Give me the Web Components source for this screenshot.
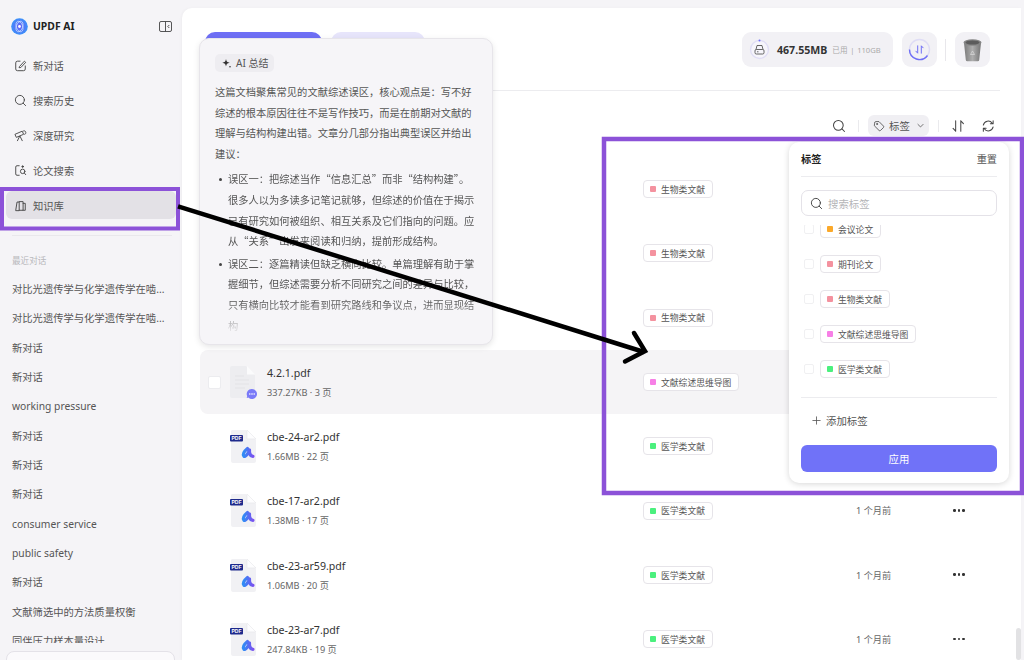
<!DOCTYPE html>
<html lang="zh-CN">
<head>
<meta charset="utf-8">
<title>UPDF AI</title>
<style>
  html, body { margin: 0; height: 100%; overflow: hidden; }
  body {
    background: #f5f4f7;
    font-family: "Noto Sans", "Noto Sans CJK SC", sans-serif;
    color: #444;
  }
</style>
</head>
<body>
<app-shell>
  <app-sidebar></app-sidebar>
  <knowledge-main></knowledge-main>
  <summary-card></summary-card>
  <tag-popover></tag-popover>
  <annotation-layer></annotation-layer>
</app-shell>
<script>
const ICONS = {
  edit: '<path d="M7 2.500H4a2 2 0 0 0-2 2v7a2 2 0 0 0 2 2h7a2 2 0 0 0 2-2V8"/><path d="M6.500 8.500 12 2.500l1.500 1.400-5.600 5.900-1.600.2z"/>',
  search: '<circle cx="6.800" cy="6.800" r="5.200"/><path d="m10.700 10.700 2.700 2.700"/>',
  scope: '<path d="m1.500 6 8-3.500 1.600 3.600-8 3.400z"/><path d="M11 2.200c1.500-.5 2.400.3 2.600 1.700.2 1.300-.3 2-1.300 2.200"/><path d="m6.500 8.500-2.500 5M7 8.500l2.500 5"/>',
  paper: '<path d="M6 2H3.500A1.500 1.500 0 0 0 2 3.500v8A1.500 1.500 0 0 0 3.500 13H6"/><circle cx="10" cy="8.500" r="2.600"/><path d="m12 10.500 1.500 1.800"/><circle cx="10" cy="3" r=".9" fill="currentColor"/>',
  library: '<path d="M2 13 3.500 3.500H6V13z"/><path d="M6 3h4.500v10H6"/><path d="M10.500 5H13v8h-2.500"/>',
  tag: '<path d="M2 3.500A1.500 1.500 0 0 1 3.500 2h4L13 7.500a1.400 1.400 0 0 1 0 2L9.500 13a1.400 1.400 0 0 1-2 0L2 7.500z"/><circle cx="5" cy="5" r=".7"/>',
  chevron: '<path d="m4 6 3.500 3.500L11 6"/>',
  sort: '<path d="M5 2v11M5 13l-2.800-3"/><path d="M10.500 13V2M10.500 2l2.800 3"/>',
  refresh: '<path d="M2.500 6.500A5.300 5.300 0 0 1 12 4.500M13 2v3h-3"/><path d="M13 8.500A5.300 5.300 0 0 1 3.500 10.500M2.500 13v-3h3"/>',
  plus: '<path d="M7.500 2.500v10M2.500 7.500h10"/>'
};

function icon(name, size) {
  return `<svg width="${size}" height="${size}" viewBox="0 0 15 15" fill="none" stroke="currentColor" stroke-width="1.100" stroke-linecap="round" stroke-linejoin="round" aria-hidden="true">${ICONS[name]}</svg>`;
}

class AppShell extends HTMLElement {
  constructor() {
    super();
    this.attachShadow({ mode: 'open' });
    this.shadowRoot.innerHTML = `
      <style>
        :host { display: flex; position: relative; width: 1024px; height: 660px; overflow: hidden; }
      </style>
      <slot></slot>`;
  }
}

class NavItem extends HTMLElement {
  constructor() {
    super();
    this.attachShadow({ mode: 'open' });
  }
  connectedCallback() {
    this.shadowRoot.innerHTML = `
      <style>
        :host { display: flex; align-items: center; gap: 6px; height: 28px; margin: 3.500px 6px; padding-left: 8px; border-radius: 6px; color: #555; font-size: 10.300px; }
        :host([active]) { background: #e3e1e6; }
        svg { flex: none; color: #4a4a4a; }
      </style>
      ${icon(this.getAttribute('icon'), 13)}<slot></slot>`;
  }
}

class AppSidebar extends HTMLElement {
  constructor() {
    super();
    this.attachShadow({ mode: 'open' });
  }
  connectedCallback() {
    const history = ['对比光遗传学与化学遗传学在啮...', '对比光遗传学与化学遗传学在啮...', '新对话', '新对话', 'working pressure', '新对话', '新对话', '新对话', 'consumer service', 'public safety', '新对话', '文献筛选中的方法质量权衡', '同伴压力样本量设计'];
    this.shadowRoot.innerHTML = `
      <style>
        :host { display: flex; flex-direction: column; flex: none; width: 182px; height: 660px; box-sizing: border-box; background: #f5f4f7; }
        .brand { display: flex; align-items: center; height: 24px; margin: 14px 10px 9.500px 11px; gap: 5px; }
        .brand b { flex: 1; font-size: 10.400px; color: #222; font-weight: 700; }
        nav { display: flex; flex-direction: column; }
        hr { border: 0; border-top: 1px solid #e9e8ec; margin: 12.500px 10px 0 12px; width: 160px; }
        .label { height: 12px; line-height: 12px; margin: 19px 0 8px 12px; font-size: 8.600px; color: #b8b8bc; }
        .history { flex: 1; overflow: hidden; min-height: 0; }
        .history div { height: 29.350px; line-height: 29.350px; padding-left: 12px; font-size: 10.300px; color: #555; white-space: nowrap; }
        .ask { flex: none; height: 20px; margin: 8px 7px -13px 6px; background: #fbfafc; border: 1px solid #e4e2e8; border-radius: 8px; }
      </style>
      <div class="brand">
        <svg width="17" height="17" viewBox="0 0 17 17" aria-hidden="true">
          <defs><radialGradient id="lg" cx=".5" cy=".5" r=".6"><stop offset="0" stop-color="#6a5cf6"/><stop offset=".6" stop-color="#4a80f8"/><stop offset="1" stop-color="#2ea2fb"/></radialGradient></defs>
          <circle cx="8.500" cy="8.500" r="8.300" fill="url(#lg)"/>
          <ellipse cx="8.500" cy="8.500" rx="5.500" ry="3.200" fill="none" stroke="#cfe6ff" stroke-width=".7" transform="rotate(70 8.500 8.500)"/>
          <ellipse cx="8.500" cy="8.500" rx="5.500" ry="3.200" fill="none" stroke="#cfe6ff" stroke-width=".7" transform="rotate(-70 8.500 8.500)"/>
          <circle cx="8.500" cy="8.500" r="1.400" fill="#fff"/>
        </svg>
        <b>UPDF AI</b>
        <svg width="13" height="11" viewBox="0 0 13 11" fill="none" stroke="#444" stroke-width=".9" aria-hidden="true">
          <rect x=".5" y=".5" width="12" height="10" rx="1.500"/><path d="M6.500.5v10M10.300 4 8.800 5.500l1.500 1.500"/>
        </svg>
      </div>
      <nav>
        <nav-item icon="edit">新对话</nav-item>
        <nav-item icon="search">搜索历史</nav-item>
        <nav-item icon="scope">深度研究</nav-item>
        <nav-item icon="paper">论文搜索</nav-item>
        <nav-item icon="library" active>知识库</nav-item>
      </nav>
      <hr>
      <div class="label">最近对话</div>
      <div class="history">${history.map(t => `<div>${t}</div>`).join('')}</div>
      <div class="ask"></div>`;
  }
}

class TagChip extends HTMLElement {
  constructor() {
    super();
    this.attachShadow({ mode: 'open' });
  }
  connectedCallback() {
    this.shadowRoot.innerHTML = `
      <style>
        :host { display: inline-flex; align-items: center; gap: 5px; height: 18px; box-sizing: border-box; padding: 0 7px 0 6px; background: #fff; border: 1px solid #e6e4e9; border-radius: 4px; color: #555; font-size: 8.800px; white-space: nowrap; }
        i { width: 6px; height: 6px; border-radius: 1px; background: ${this.getAttribute('color')}; }
      </style>
      <i></i><slot></slot>`;
  }
}

const TAG_COLORS = { '生物类文献': '#f4929f', '文献综述思维导图': '#f77fe6', '医学类文献': '#4bf07e', '会议论文': '#fba92a', '期刊论文': '#f4929f' };

class FileRow extends HTMLElement {
  constructor() {
    super();
    this.attachShadow({ mode: 'open' });
  }
  fileIcon() {
    if (this.hasAttribute('note')) {
      return `<svg width="30" height="35" viewBox="0 0 30 35" aria-hidden="true">
        <path d="M3 1h14l9 9v21a2 2 0 0 1-2 2H3a2 2 0 0 1-2-2V3a2 2 0 0 1 2-2z" fill="#ededf0"/>
        <path d="M18 1l8 8.500h-8z" fill="#fbfbfc"/>
        <path d="M6 11h9M6 15h14M6 19h14M6 23h10" stroke="#e3e3e6" stroke-width="1"/>
        <path d="M23 24a5 5 0 1 1-3.600 8.500l-1.700.5.500-1.800A5 5 0 0 1 23 24z" fill="#7a7af8"/>
        <circle cx="20.800" cy="29" r=".8" fill="#fff"/><circle cx="23" cy="29" r=".8" fill="#fff"/><circle cx="25.200" cy="29" r=".8" fill="#fff"/>
      </svg>`;
    }
    return `<svg width="30" height="35" viewBox="0 0 30 35" aria-hidden="true">
      <defs><linearGradient id="ua" x1="0" x2="1"><stop offset="0" stop-color="#2f8cf5"/><stop offset="1" stop-color="#7a52f0"/></linearGradient></defs>
      <path d="M3 1h14l10 10v21a2 2 0 0 1-2 2H4a2 2 0 0 1-2-2V3a2 2 0 0 1 1-2z" fill="#f1f1f4"/>
      <path d="M18 1l9 9h-9z" fill="#fdfdfe" stroke="#e6e6ea" stroke-width=".6"/>
      <rect x="1" y="6" width="13" height="6.500" rx="1" fill="#1e2a8c"/>
      <text x="7.500" y="11.200" text-anchor="middle" font-family="Liberation Sans, sans-serif" font-size="5" font-weight="700" fill="#fff">PDF</text>
      <path d="M18.500 19.500C15.500 22 13.500 25 14.800 27 16.300 28.500 19 25 20.500 21 20.300 24 21 27 24 27.300" fill="none" stroke="url(#ua)" stroke-width="3.200" stroke-linecap="round" stroke-linejoin="round"/>
    </svg>`;
  }
  connectedCallback() {
    const name = this.getAttribute('name');
    const meta = this.getAttribute('meta');
    const tag = this.getAttribute('tag');
    const date = this.getAttribute('date');
    this.shadowRoot.innerHTML = `
      <style>
        :host { display: grid; grid-template-columns: 21px 38px 376px 213px 97px 1fr; align-items: center; height: 64.330px; padding-left: 8px; box-sizing: border-box; border-radius: 8px 0 0 8px; }
        :host([note]) { background: #f5f4f6; }
        .cb { width: 13px; height: 13px; background: #fff; border-radius: 2px; border: 1px solid #ececef; box-sizing: border-box; visibility: hidden; }
        :host([note]) .cb { visibility: visible; }
        .name { font-size: 10.600px; color: #333; line-height: 14px; margin-top: 0; }
        .meta { font-size: 9.200px; color: #666; line-height: 12px; margin-top: 7px; }
        .tag { display: flex; }
        .date { font-size: 9.200px; color: #666; margin-top: -1px; }
        .dots { display: flex; gap: 2px; margin-top: -1px; }
        .dots i { width: 2.500px; height: 2.500px; background: #333; border-radius: 50%; }
        svg { display: block; }
      </style>
      <div class="cb"></div>
      <div>${name ? this.fileIcon() : ''}</div>
      <div>${name ? `<div class="name">${name}</div><div class="meta">${meta}</div>` : ''}</div>
      <div class="tag"><tag-chip color="${TAG_COLORS[tag]}">${tag}</tag-chip></div>
      <div class="date">${date || ''}</div>
      <div>${date ? '<div class="dots"><i></i><i></i><i></i></div>' : ''}</div>`;
  }
}

class StorageBar extends HTMLElement {
  constructor() {
    super();
    this.attachShadow({ mode: 'open' });
    this.shadowRoot.innerHTML = `
      <style>
        :host { display: flex; align-items: center; height: 35px; }
        .pill { display: flex; align-items: center; width: 151px; height: 35px; box-sizing: border-box; padding-left: 7px; background: #f2f1f5; border-radius: 9px; }
        .pill b { margin-left: 7px; font-size: 10.600px; color: #333; font-weight: 700; }
        .pill span { margin-left: 5px; font-size: 7.600px; color: #aaa; white-space: nowrap; word-spacing: -.6px; }
        .square { display: flex; align-items: center; justify-content: center; width: 35px; height: 35px; background: #f2f1f5; border-radius: 9px; }
        .sep { width: 1px; height: 22px; background: #e8e7eb; margin: 0 9px 0 8px; }
        .sync { margin-left: 9px; }
      </style>
      <div class="pill">
        <svg width="21" height="21" viewBox="0 0 21 21" aria-hidden="true">
          <circle cx="10.500" cy="10.500" r="9" fill="#f6f5fb" stroke="#e0def5" stroke-width="1.400"/>
          <circle cx="10.500" cy="1.500" r="1" fill="#6f6ff5"/>
          <g fill="none" stroke="#444" stroke-width=".8"><rect x="6" y="10.500" width="9" height="4.500" rx="1.300"/><path d="M7 10.500 8 6.500h5l1 4M8 12.800h1.500"/></g>
        </svg>
        <b>467.55MB</b><span>已用 &nbsp;|&nbsp; 110GB</span>
      </div>
      <div class="square sync">
        <svg width="23" height="23" viewBox="0 0 23 23" fill="none" aria-hidden="true">
          <circle cx="11.500" cy="11.500" r="10" stroke="#dedcf5" stroke-width="1.400"/>
          <path d="M19.500 17.500A10 10 0 0 1 1.500 11.500" stroke="#6f6ff5" stroke-width="1.400"/>
          <path d="M9.700 7.800v7.400l-1.800-2M13.300 15.200V7.800l1.800 2" stroke="#6f6ff5" stroke-width="1" stroke-linecap="round" stroke-linejoin="round"/>
        </svg>
      </div>
      <div class="sep"></div>
      <div class="square">
        <svg width="21" height="24" viewBox="0 0 21 24" aria-hidden="true">
          <defs><linearGradient id="bin" x1="0" x2="1"><stop offset="0" stop-color="#7b7b7b"/><stop offset=".5" stop-color="#aeaeae"/><stop offset="1" stop-color="#767676"/></linearGradient></defs>
          <path d="M2 5h17l-1.800 17a1.500 1.500 0 0 1-1.500 1.300H5.300A1.500 1.500 0 0 1 3.800 22z" fill="url(#bin)"/>
          <ellipse cx="10.500" cy="4.500" rx="9" ry="3.200" fill="#858585"/>
          <ellipse cx="10.500" cy="4.500" rx="7" ry="2" fill="#5c5c5c"/>
          <path d="M8.500 16.500l2-3.500 2 3.500z" fill="none" stroke="#d5d5d5" stroke-width=".8"/>
        </svg>
      </div>`;
  }
}

class KnowledgeMain extends HTMLElement {
  constructor() {
    super();
    this.attachShadow({ mode: 'open' });
  }
  connectedCallback() {
    const rows = [
      { tag: '生物类文献' }, { tag: '生物类文献' }, { tag: '生物类文献' },
      { name: '4.2.1.pdf', meta: '337.27KB · 3 页', tag: '文献综述思维导图', note: true },
      { name: 'cbe-24-ar2.pdf', meta: '1.66MB · 22 页', tag: '医学类文献' },
      { name: 'cbe-17-ar2.pdf', meta: '1.38MB · 17 页', tag: '医学类文献', date: '1 个月前' },
      { name: 'cbe-23-ar59.pdf', meta: '1.06MB · 20 页', tag: '医学类文献', date: '1 个月前' },
      { name: 'cbe-23-ar7.pdf', meta: '247.84KB · 19 页', tag: '医学类文献', date: '1 个月前' }
    ];
    const attrs = r => ['name', 'meta', 'tag', 'date'].filter(k => r[k]).map(k => `${k}="${r[k]}"`).join(' ') + (r.note ? ' note' : '');
    this.shadowRoot.innerHTML = `
      <style>
        :host { display: flex; flex-direction: column; position: relative; flex: none; width: 839px; height: 652px; margin-top: 8px; background: #fff; border-top-left-radius: 10px; box-shadow: -1px 0 3px rgba(0,0,0,.03); overflow: hidden; }
        header { display: flex; justify-content: space-between; height: 35px; margin: 24px 21px 0 23px; padding: 0 10px 23px 0; border-bottom: 1px solid #ececef; }
        .tabs { display: flex; gap: 9px; }
        .tabs i { display: block; width: 117px; height: 32px; background: #6f6ff5; border-radius: 10px 10px 0 0; }
        .tabs i + i { width: 94px; background: #e7e5fb; }
        .tools { display: flex; align-items: center; justify-content: flex-end; height: 21px; margin: 24px 26px 0 0; color: #444; }
        .tools .chip { display: flex; align-items: center; gap: 4px; width: 61px; height: 21px; box-sizing: border-box; padding-left: 5px; background: #f0eff3; border-radius: 6px; font-size: 10.400px; color: #555; }
        .sep { width: 1px; height: 12px; background: #eaeaed; }
        .list { margin: 21px 21px 0 18px; }
        .scroll { position: absolute; right: 0; top: 620px; width: 5px; height: 32px; background: #e2e2e4; border-radius: 3px; }
      </style>
      <header>
        <div class="tabs"><i></i><i></i></div>
        <storage-bar></storage-bar>
      </header>
      <div class="tools">
        ${icon('search', 14)}
        <span class="sep" style="margin:0 9px 0 12px"></span>
        <div class="chip">${icon('tag', 12)}<span>标签</span><span style="display:flex;margin-left:1px">${icon('chevron', 11)}</span></div>
        <span class="sep" style="margin:0 12px 0 9px"></span>
        ${icon('sort', 14)}
        <span style="width:16px"></span>
        ${icon('refresh', 14)}
      </div>
      <div class="list">${rows.map(r => `<file-row ${attrs(r)}></file-row>`).join('')}</div>
      <div class="scroll"></div>`;
  }
}

class SummaryCard extends HTMLElement {
  constructor() {
    super();
    this.attachShadow({ mode: 'open' });
    this.shadowRoot.innerHTML = `
      <style>
        :host { position: absolute; left: 199px; top: 38px; width: 294px; height: 307px; box-sizing: border-box; padding: 15px 14px 0 15px; background: #f6f5f8; border: 1px solid #e7e5ea; border-radius: 10px; box-shadow: 0 2px 6px rgba(0,0,0,.1); overflow: hidden; font-size: 10.270px; line-height: 20.600px; color: #555; white-space: nowrap; }
        .chip { display: inline-flex; align-items: center; gap: 4px; height: 18px; padding: 0 6px; background: #eeedf1; border-radius: 5px; font-size: 10px; line-height: 18px; color: #555; }
        p, ul { font-family: "Noto Sans CJK SC", sans-serif; }
        p { margin: 7px 0 5px; }
        ul { margin: 0; padding: 0 0 0 13px; -webkit-mask-image: linear-gradient(#000 calc(100% - 36px), transparent 100%); mask-image: linear-gradient(#000 calc(100% - 36px), transparent 100%); }
        li { margin-bottom: 2px; padding-left: 0; list-style: none; position: relative; }
        li::before { content: ""; position: absolute; left: -9px; top: 9px; width: 3px; height: 3px; background: #444; border-radius: 50%; }
      </style>
      <div class="chip">
        <svg width="11" height="11" viewBox="0 0 11 11" aria-hidden="true"><path d="M5 1c.4 2.500 1.200 3.300 3.700 3.800C6.200 5.200 5.400 6 5 8.500 4.600 6 3.800 5.200 1.300 4.800 3.800 4.300 4.600 3.500 5 1z" fill="#333"/><circle cx="9" cy="8.800" r=".8" fill="#333"/></svg>
        AI 总结
      </div>
      <p>这篇文档聚焦常见的文献综述误区，核心观点是：写不好<br>综述的根本原因往往不是写作技巧，而是在前期对文献的<br>理解与结构构建出错。文章分几部分指出典型误区并给出<br>建议：</p>
      <ul>
        <li>误区一：把综述当作“信息汇总”而非“结构构建”。<br>很多人以为多读多记笔记就够，但综述的价值在于揭示<br>已有研究如何被组织、相互关系及它们指向的问题。应<br>从“关系”出发来阅读和归纳，提前形成结构。</li>
        <li>误区二：逐篇精读但缺乏横向比较。单篇理解有助于掌<br>握细节，但综述需要分析不同研究之间的差异与比较，<br>只有横向比较才能看到研究路线和争议点，进而显现结<br>构</li>
      </ul>`;
  }
}

class TagOption extends HTMLElement {
  constructor() {
    super();
    this.attachShadow({ mode: 'open' });
  }
  connectedCallback() {
    const name = this.getAttribute('name');
    this.shadowRoot.innerHTML = `
      <style>
        :host { display: flex; align-items: center; gap: 6px; height: 35px; padding-left: 3px; }
        i { width: 10px; height: 10px; box-sizing: border-box; border: 1px solid #f0f0f2; border-radius: 2px; background: #fff; }
      </style>
      <i></i><tag-chip color="${TAG_COLORS[name]}">${name}</tag-chip>`;
  }
}

class TagPopover extends HTMLElement {
  constructor() {
    super();
    this.attachShadow({ mode: 'open' });
    this.shadowRoot.innerHTML = `
      <style>
        :host { position: absolute; left: 789px; top: 142px; width: 220px; height: 341px; box-sizing: border-box; padding: 0 12px; display: flex; flex-direction: column; background: #fff; border-radius: 10px; box-shadow: 0 1px 6px rgba(0,0,0,.16); }
        .head { display: flex; justify-content: space-between; align-items: center; height: 32px; padding-bottom: 2px; border-bottom: 1px solid #ececef; font-size: 10.200px; color: #555; flex: none; }
        .head b { color: #222; font-weight: 700; }
        .search { display: flex; align-items: center; gap: 5px; height: 26px; margin-top: 13px; padding-left: 8px; box-sizing: border-box; border: 1px solid #e4e2e8; border-radius: 7px; font-size: 10.400px; color: #b5b5b8; flex: none; }
        .search svg { color: #444; }
        .options { height: 172px; margin-top: 9px; overflow: hidden; border-bottom: 1px solid #ececef; flex: none; }
        .options div { margin-top: -13.500px; }
        .add { display: flex; align-items: center; gap: 4px; height: 45px; padding: 0 0 2px 10px; font-size: 10.400px; color: #555; flex: none; }
        .apply { display: flex; align-items: center; justify-content: center; height: 27px; background: #7072f8; color: #fff; border-radius: 6px; font-size: 10.400px; flex: none; }
      </style>
      <div class="head"><b>标签</b><span>重置</span></div>
      <div class="search">${icon('search', 13)}<span>搜索标签</span></div>
      <div class="options"><div>
        <tag-option name="会议论文"></tag-option>
        <tag-option name="期刊论文"></tag-option>
        <tag-option name="生物类文献"></tag-option>
        <tag-option name="文献综述思维导图"></tag-option>
        <tag-option name="医学类文献"></tag-option>
      </div></div>
      <div class="add">${icon('plus', 11)}<span>添加标签</span></div>
      <div class="apply">应用</div>`;
  }
}

// the purple boxes and the arrow are drawn over the screenshot, so they sit on a free canvas
class AnnotationLayer extends HTMLElement {
  constructor() {
    super();
    this.attachShadow({ mode: 'open' });
    this.shadowRoot.innerHTML = `
      <style>
        :host { position: absolute; inset: 0; pointer-events: none; }
        svg { display: block; }
      </style>
      <svg width="1024" height="660" viewBox="0 0 1024 660" fill="none" aria-hidden="true">
        <rect x="2" y="189" width="176" height="39.500" stroke="#8c52d8" stroke-width="4"/>
        <rect x="604" y="139" width="418" height="354" stroke="#8c52d8" stroke-width="4.500"/>
        <path d="M178 206.300 644 352" stroke="#000" stroke-width="4.500"/>
        <path d="M634 333 645 351 625 361.500" stroke="#000" stroke-width="4.500" stroke-linecap="round"/>
      </svg>`;
  }
}

customElements.define('nav-item', NavItem);
customElements.define('app-sidebar', AppSidebar);
customElements.define('tag-chip', TagChip);
customElements.define('file-row', FileRow);
customElements.define('storage-bar', StorageBar);
customElements.define('knowledge-main', KnowledgeMain);
customElements.define('summary-card', SummaryCard);
customElements.define('tag-option', TagOption);
customElements.define('tag-popover', TagPopover);
customElements.define('annotation-layer', AnnotationLayer);
customElements.define('app-shell', AppShell);
</script>
</body>
</html>
